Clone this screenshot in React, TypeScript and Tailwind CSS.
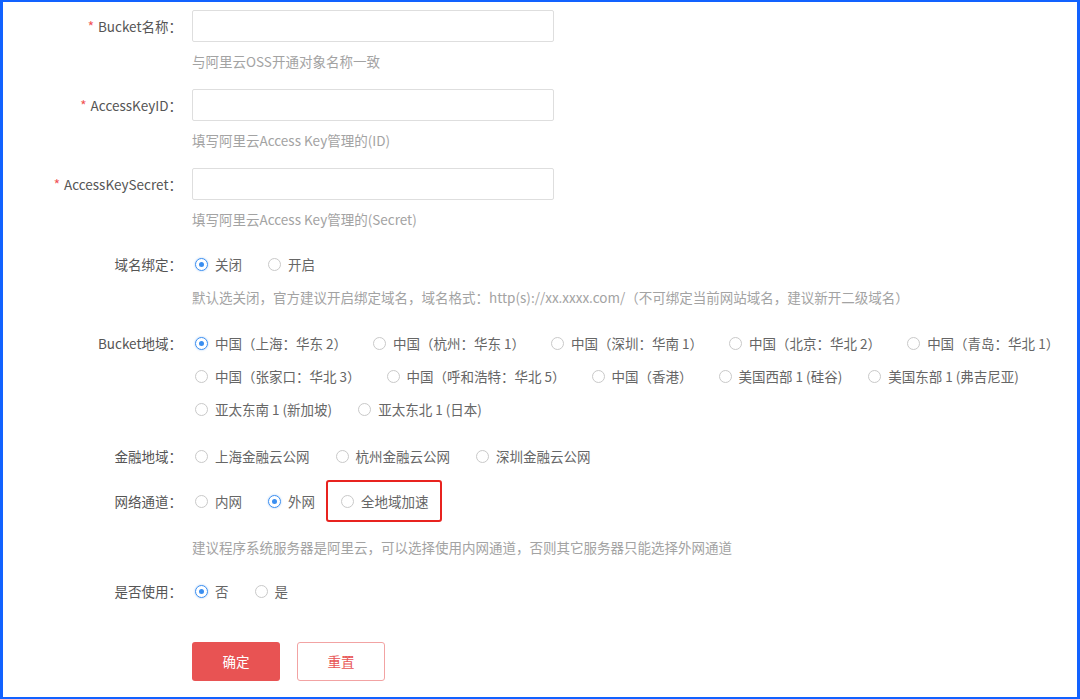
import type { ReactNode } from 'react';

const FONT = { fontFamily: '"Noto Sans CJK SC", "Microsoft YaHei", sans-serif' };

interface Option {
  label: string;
  checked?: boolean;
  marked?: boolean;
}

function Radio({ label, checked = false, marked = false }: Option) {
  return (
    <label className="relative mr-[23px] ml-[3px] flex h-[20px] items-center whitespace-nowrap">
      <span
        className={
          checked
            ? 'flex h-[13px] w-[13px] items-center justify-center rounded-full border border-[#3a8ef0] shadow-[0_0_2px_rgba(58,142,240,0.5)]'
            : 'flex h-[13px] w-[13px] items-center justify-center rounded-full border border-[#c9c9c9]'
        }
      >
        {checked ? <span className="h-[5px] w-[5px] rounded-full bg-[#3a8ef0]" /> : null}
      </span>
      <span className="ml-[7px] text-[13.5px] text-[#666]">{label}</span>
      {marked ? (
        <span className="pointer-events-none absolute -top-[11px] -right-[13px] -bottom-[11px] -left-[15px] rounded-[3px] border-2 border-[#e8231f]" />
      ) : null}
    </label>
  );
}

function RadioRow({ options }: { options: Option[] }) {
  return (
    <div className="flex items-center">
      {options.map((o) => (
        <Radio key={o.label} {...o} />
      ))}
    </div>
  );
}

interface FormItemProps {
  label: string;
  required?: boolean;
  tall?: boolean;
  className?: string;
  children: ReactNode;
}

function FormItem({ label, required = false, tall = false, className = '', children }: FormItemProps) {
  return (
    <div className={`flex items-start ${className}`}>
      <div
        className={`w-[189px] shrink-0 pr-[10px] text-right text-[13.5px] text-[#555] ${
          tall ? 'leading-[32px]' : 'leading-[20px]'
        }`}
      >
        {required ? <span className="mr-[4px] text-[#f05050]">*</span> : null}
        {label}：
      </div>
      <div className="min-w-0 flex-1">{children}</div>
    </div>
  );
}

function Helper({ children, className = '' }: { children: ReactNode; className?: string }) {
  return <p className={`text-[13.5px] leading-[18px] text-[#a3a3a3] ${className}`}>{children}</p>;
}

function TextInput() {
  return (
    <input
      type="text"
      className="block h-[32px] w-[362px] rounded-[2px] border border-[#dedede] bg-white px-2 text-[13px] outline-none"
    />
  );
}

const bucketRows: Option[][] = [
  [
    { label: '中国（上海：华东 2）', checked: true },
    { label: '中国（杭州：华东 1）' },
    { label: '中国（深圳：华南 1）' },
    { label: '中国（北京：华北 2）' },
    { label: '中国（青岛：华北 1）' },
  ],
  [
    { label: '中国（张家口：华北 3）' },
    { label: '中国（呼和浩特：华北 5）' },
    { label: '中国（香港）' },
    { label: '美国西部 1 (硅谷)' },
    { label: '美国东部 1 (弗吉尼亚)' },
  ],
  [{ label: '亚太东南 1 (新加坡)' }, { label: '亚太东北 1 (日本)' }],
];

export default function App() {
  return (
    <div
      style={FONT}
      className="h-[699px] w-full overflow-hidden border-x-[3px] border-y-[2px] border-[#1262ff] bg-white"
    >
      <FormItem label="Bucket名称" required tall className="mt-[8px]">
        <TextInput />
        <Helper className="mt-[10px]">与阿里云OSS开通对象名称一致</Helper>
      </FormItem>

      <FormItem label="AccessKeyID" required tall className="mt-[19px]">
        <TextInput />
        <Helper className="mt-[10px]">填写阿里云Access Key管理的(ID)</Helper>
      </FormItem>

      <FormItem label="AccessKeySecret" required tall className="mt-[19px]">
        <TextInput />
        <Helper className="mt-[10px]">填写阿里云Access Key管理的(Secret)</Helper>
      </FormItem>

      <FormItem label="域名绑定" className="mt-[26px]">
        <RadioRow options={[{ label: '关闭', checked: true }, { label: '开启' }]} />
        <Helper className="mt-[14px]">
          默认选关闭，官方建议开启绑定域名，域名格式：http(s)://xx.xxxx.com/（不可绑定当前网站域名，建议新开二级域名）
        </Helper>
      </FormItem>

      <FormItem label="Bucket地域" className="mt-[27px]">
        <div className="flex flex-col gap-[13px]">
          {bucketRows.map((row, i) => (
            <RadioRow key={i} options={row} />
          ))}
        </div>
      </FormItem>

      <FormItem label="金融地域" className="mt-[27px]">
        <RadioRow
          options={[{ label: '上海金融云公网' }, { label: '杭州金融云公网' }, { label: '深圳金融云公网' }]}
        />
      </FormItem>

      <FormItem label="网络通道" className="mt-[25px]">
        <RadioRow
          options={[{ label: '内网' }, { label: '外网', checked: true }, { label: '全地域加速', marked: true }]}
        />
        <Helper className="mt-[27px]">
          建议程序系统服务器是阿里云，可以选择使用内网通道，否则其它服务器只能选择外网通道
        </Helper>
      </FormItem>

      <FormItem label="是否使用" className="mt-[25px]">
        <RadioRow options={[{ label: '否', checked: true }, { label: '是' }]} />
      </FormItem>

      <div className="mt-[41px] flex gap-[17px] pl-[189px]">
        <button
          type="button"
          className="h-[39px] w-[88px] rounded-[3px] bg-[#e85353] text-[13.5px] text-white"
        >
          确定
        </button>
        <button
          type="button"
          className="h-[39px] w-[88px] rounded-[3px] border border-[#f2a3a3] bg-white text-[13.5px] text-[#e85353]"
        >
          重置
        </button>
      </div>
    </div>
  );
}
